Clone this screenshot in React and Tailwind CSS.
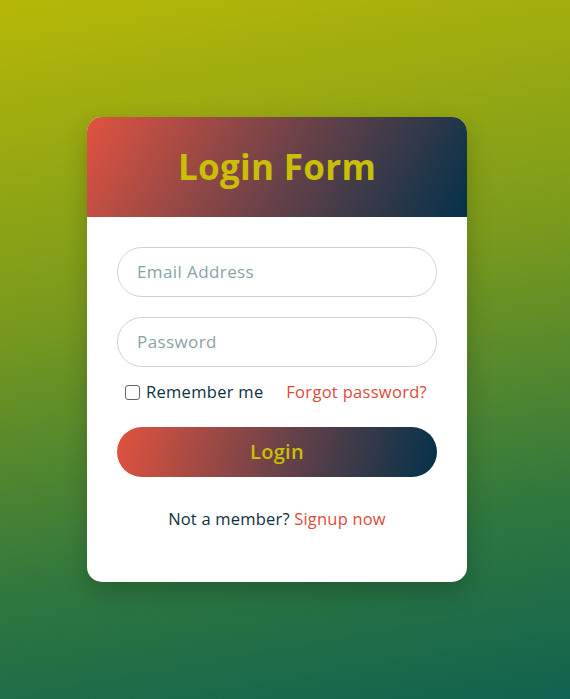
export default function App() {
    return (
        <div className="min-h-[699px] w-full bg-[linear-gradient(170deg,#b6b807_0%,#7a9a1c_40%,#2f773e_75%,#106350_100%)] pt-[117px] font-['Open_Sans',sans-serif]">
            <div className="ml-[87px] w-[380px] overflow-hidden rounded-[15px] bg-white shadow-[0_10px_25px_rgba(0,0,0,0.2)]">
                {/* Header */}
                <div className="flex h-[100px] items-center justify-center bg-[linear-gradient(120deg,#e1533f_0%,#6e4248_50%,#03314a_100%)]">
                    <h1 className="text-[35px] font-bold tracking-[0.3px] text-[#c9bf06]">Login Form</h1>
                </div>

                {/* Form */}
                <div className="px-[30px] pt-[30px] pb-[50px]">
                    <div className="flex h-[50px] items-center rounded-full border border-[#d2d2d2] px-[19px]">
                        <span className="text-[17px] tracking-[0.4px] text-[#8aa2a8]">Email Address</span>
                    </div>
                    <div className="mt-[20px] flex h-[50px] items-center rounded-full border border-[#d2d2d2] px-[19px]">
                        <span className="text-[17px] tracking-[0.4px] text-[#8aa2a8]">Password</span>
                    </div>

                    <div className="mt-[13px] flex items-center justify-between pl-[8px] pr-[10px]">
                        <label className="flex items-center gap-[6px] text-[16.5px] tracking-[0.3px] text-[#0b3142]">
                            <span className="h-[15px] w-[15px] rounded-[3px] border border-[#666] bg-white"></span>
                            Remember me
                        </label>
                        <span className="text-[16.5px] tracking-[0.3px] text-[#de4b38]">Forgot password?</span>
                    </div>

                    <div className="mt-[22px] flex h-[50px] items-center justify-center rounded-full bg-[linear-gradient(105deg,#e1533f_0%,#6e4248_50%,#03314a_100%)]">
                        <span className="text-[20px] font-semibold tracking-[0.3px] text-[#c9bf06]">Login</span>
                    </div>

                    <p className="mt-[30px] text-center text-[16.5px] tracking-[0.2px] text-[#0b3142]">
                        Not a member? <span className="text-[#de4b38]">Signup now</span>
                    </p>
                </div>
            </div>
        </div>
    );
}
